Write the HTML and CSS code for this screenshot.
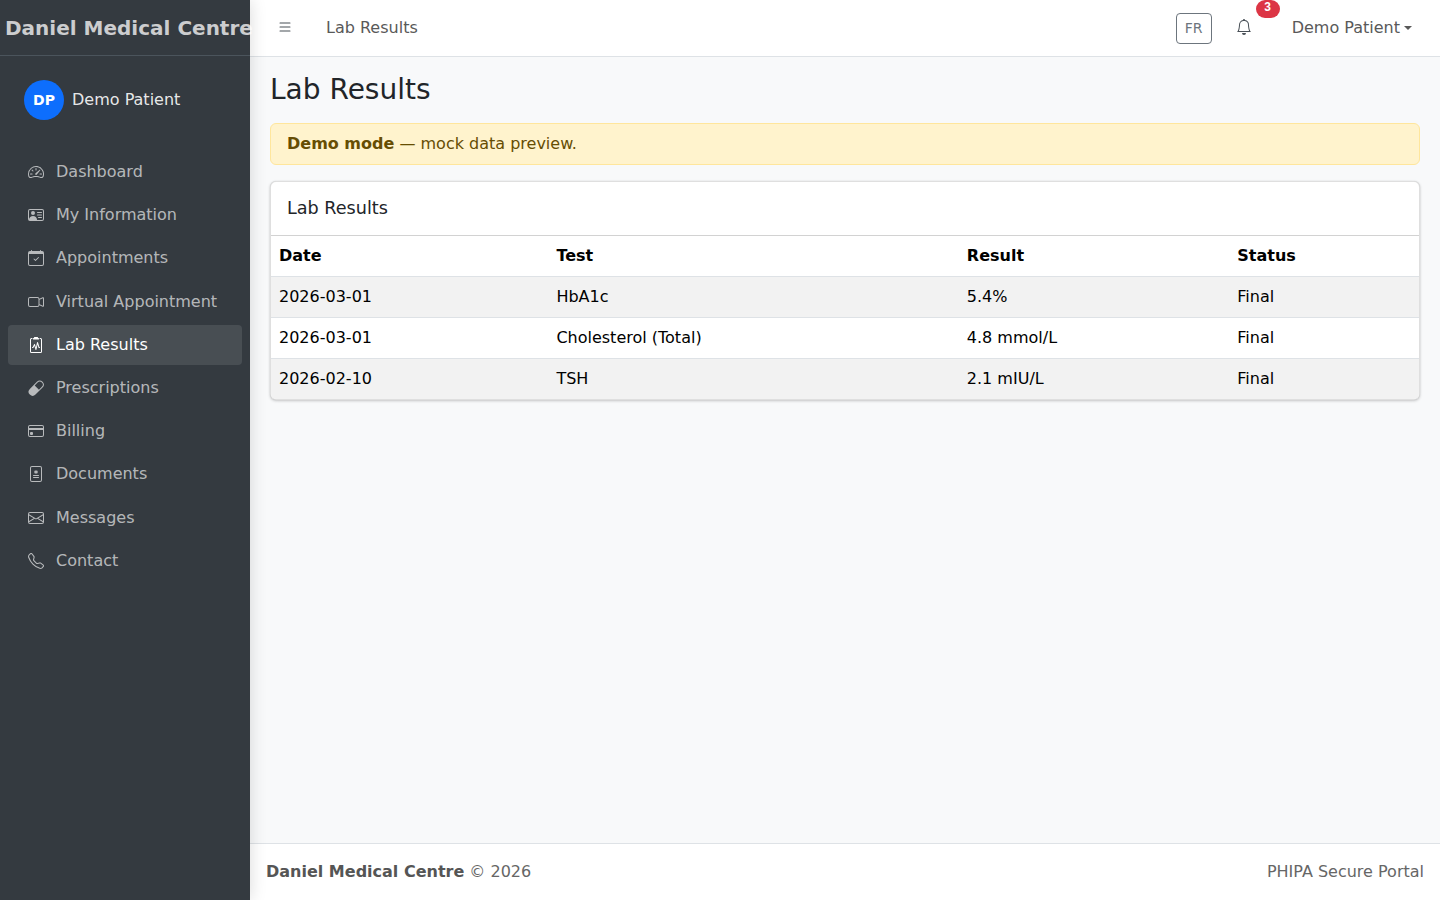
FILE: index.html
```html
<!DOCTYPE html>
<html lang="en">
<head>
<meta charset="utf-8">
<title>Lab Results</title>
<link rel="stylesheet" href="styles.css">
</head>
<body>
<div class="app">
  <aside class="sidebar">
    <div class="brand">Daniel Medical Centre</div>
    <div class="user-panel">
      <div class="avatar">DP</div>
      <span class="user-name">Demo Patient</span>
    </div>
    <nav class="side-nav">
      <a class="nav-link" href="#"><span class="nav-icon"><svg class="bi" viewBox="0 0 16 16"><path d="M8 4a.5.5 0 0 1 .5.5V6a.5.5 0 0 1-1 0V4.5A.5.5 0 0 1 8 4M3.732 5.732a.5.5 0 0 1 .707 0l.915.914a.5.5 0 1 1-.708.708l-.914-.915a.5.5 0 0 1 0-.707M2 10a.5.5 0 0 1 .5-.5h1.586a.5.5 0 0 1 0 1H2.5A.5.5 0 0 1 2 10m9.5 0a.5.5 0 0 1 .5-.5h1.5a.5.5 0 0 1 0 1H12a.5.5 0 0 1-.5-.5m.754-4.246a.39.39 0 0 0-.527-.02L7.547 9.31a.91.91 0 1 0 1.302 1.258l3.434-4.297a.39.39 0 0 0-.029-.518z"/><path fill-rule="evenodd" d="M0 10a8 8 0 1 1 15.547 2.661c-.442 1.253-1.845 1.602-2.932 1.25C11.309 13.488 9.475 13 8 13c-1.474 0-3.31.488-4.615.911-1.087.352-2.49.003-2.932-1.25A8 8 0 0 1 0 10m8-7a7 7 0 0 0-6.603 9.329c.203.575.923.876 1.68.63C4.397 12.533 6.358 12 8 12s3.604.532 4.923.96c.757.245 1.477-.056 1.68-.631A7 7 0 0 0 8 3"/></svg></span>Dashboard</a>
      <a class="nav-link" href="#"><span class="nav-icon"><svg class="bi" viewBox="0 0 16 16"><path d="M5 8a2 2 0 1 0 0-4 2 2 0 0 0 0 4m4-2.5a.5.5 0 0 1 .5-.5h4a.5.5 0 0 1 0 1h-4a.5.5 0 0 1-.5-.5M9 8a.5.5 0 0 1 .5-.5h4a.5.5 0 0 1 0 1h-4A.5.5 0 0 1 9 8m1 2.5a.5.5 0 0 1 .5-.5h3a.5.5 0 0 1 0 1h-3a.5.5 0 0 1-.5-.5"/><path d="M2 2a2 2 0 0 0-2 2v8a2 2 0 0 0 2 2h12a2 2 0 0 0 2-2V4a2 2 0 0 0-2-2zM1 4a1 1 0 0 1 1-1h12a1 1 0 0 1 1 1v8a1 1 0 0 1-1 1H8.96q.04-.245.04-.5C9 10.567 7.21 9 5 9c-2.086 0-3.8 1.398-3.984 3.181A1 1 0 0 1 1 12z"/></svg></span>My Information</a>
      <a class="nav-link" href="#"><span class="nav-icon"><svg class="bi" viewBox="0 0 16 16"><path d="M10.854 7.146a.5.5 0 0 1 0 .708l-3 3a.5.5 0 0 1-.708 0l-1.5-1.5a.5.5 0 1 1 .708-.708L7.5 9.793l2.646-2.647a.5.5 0 0 1 .708 0"/><path d="M3.5 0a.5.5 0 0 1 .5.5V1h8V.5a.5.5 0 0 1 1 0V1h1a2 2 0 0 1 2 2v11a2 2 0 0 1-2 2H2a2 2 0 0 1-2-2V3a2 2 0 0 1 2-2h1V.5a.5.5 0 0 1 .5-.5M1 4v10a1 1 0 0 0 1 1h12a1 1 0 0 0 1-1V4z"/></svg></span>Appointments</a>
      <a class="nav-link" href="#"><span class="nav-icon"><svg class="bi" viewBox="0 0 16 16"><path fill-rule="evenodd" d="M0 5a2 2 0 0 1 2-2h7.5a2 2 0 0 1 1.983 1.738l3.11-1.382A1 1 0 0 1 16 4.269v7.462a1 1 0 0 1-1.406.913l-3.111-1.382A2 2 0 0 1 9.5 13H2a2 2 0 0 1-2-2zm11.5 5.175 3.5 1.556V4.269l-3.5 1.556zM2 4a1 1 0 0 0-1 1v6a1 1 0 0 0 1 1h7.5a1 1 0 0 0 1-1V5a1 1 0 0 0-1-1z"/></svg></span>Virtual Appointment</a>
      <a class="nav-link active" href="#"><span class="nav-icon"><svg class="bi" viewBox="0 0 16 16"><path d="M9.5 0a.5.5 0 0 1 .5.5.5.5 0 0 0 .5.5.5.5 0 0 1 .5.5V2a.5.5 0 0 1-.5.5h-5A.5.5 0 0 1 5 2v-.5a.5.5 0 0 1 .5-.5.5.5 0 0 0 .5-.5.5.5 0 0 1 .5-.5z"/><path d="M3 2.5a.5.5 0 0 1 .5-.5H4a.5.5 0 0 0 0-1h-.5A1.5 1.5 0 0 0 2 2.5v12A1.5 1.5 0 0 0 3.5 16h9a1.5 1.5 0 0 0 1.5-1.5v-12A1.5 1.5 0 0 0 12.5 1H12a.5.5 0 0 0 0 1h.5a.5.5 0 0 1 .5.5v12a.5.5 0 0 1-.5.5h-9a.5.5 0 0 1-.5-.5z"/><path d="M9.979 5.356a.5.5 0 0 0-.968.04L7.92 10.49l-.94-3.135a.5.5 0 0 0-.926-.08L4.69 10H4.5a.5.5 0 0 0 0 1H5a.5.5 0 0 0 .447-.276l.936-1.873 1.138 3.793a.5.5 0 0 0 .968-.04L9.58 7.51l.94 3.135A.5.5 0 0 0 11 11h.5a.5.5 0 0 0 0-1h-.128z"/></svg></span>Lab Results</a>
      <a class="nav-link" href="#"><span class="nav-icon"><svg class="bi" viewBox="0 0 16 16"><path d="M1.828 8.9 8.9 1.827a4 4 0 1 1 5.657 5.657l-7.07 7.071A4 4 0 1 1 1.827 8.9Zm9.128.771 2.893-2.893a3 3 0 1 0-4.243-4.242L6.713 5.429z"/></svg></span>Prescriptions</a>
      <a class="nav-link" href="#"><span class="nav-icon"><svg class="bi" viewBox="0 0 16 16"><path d="M0 4a2 2 0 0 1 2-2h12a2 2 0 0 1 2 2v8a2 2 0 0 1-2 2H2a2 2 0 0 1-2-2zm2-1a1 1 0 0 0-1 1v1h14V4a1 1 0 0 0-1-1zm13 4H1v5a1 1 0 0 0 1 1h12a1 1 0 0 0 1-1z"/><path d="M2 10a1 1 0 0 1 1-1h1a1 1 0 0 1 1 1v1a1 1 0 0 1-1 1H3a1 1 0 0 1-1-1z"/></svg></span>Billing</a>
      <a class="nav-link" href="#"><span class="nav-icon"><svg class="bi" viewBox="0 0 16 16"><path d="M8.5 4.5a.5.5 0 0 0-1 0v.634l-.549-.317a.5.5 0 1 0-.5.866L7 6l-.549.317a.5.5 0 1 0 .5.866l.549-.317V7.5a.5.5 0 1 0 1 0v-.634l.549.317a.5.5 0 1 0 .5-.866L9 6l.549-.317a.5.5 0 1 0-.5-.866l-.549.317zM5.5 9a.5.5 0 0 0 0 1h5a.5.5 0 0 0 0-1zm0 2a.5.5 0 0 0 0 1h5a.5.5 0 0 0 0-1z"/><path d="M2 2a2 2 0 0 1 2-2h8a2 2 0 0 1 2 2v12a2 2 0 0 1-2 2H4a2 2 0 0 1-2-2zm10-1H4a1 1 0 0 0-1 1v12a1 1 0 0 0 1 1h8a1 1 0 0 0 1-1V2a1 1 0 0 0-1-1"/></svg></span>Documents</a>
      <a class="nav-link" href="#"><span class="nav-icon"><svg class="bi" viewBox="0 0 16 16"><path d="M0 4a2 2 0 0 1 2-2h12a2 2 0 0 1 2 2v8a2 2 0 0 1-2 2H2a2 2 0 0 1-2-2zm2-1a1 1 0 0 0-1 1v.217l7 4.2 7-4.2V4a1 1 0 0 0-1-1zm13 2.383-4.708 2.825L15 11.105zm-.034 6.876-5.64-3.471L8 9.583l-1.326-.795-5.64 3.47A1 1 0 0 0 2 13h12a1 1 0 0 0 .966-.741M1 11.105l4.708-2.897L1 5.383z"/></svg></span>Messages</a>
      <a class="nav-link" href="#"><span class="nav-icon"><svg class="bi" viewBox="0 0 16 16"><path d="M3.654 1.328a.678.678 0 0 0-1.015-.063L1.605 2.3c-.483.484-.661 1.169-.45 1.77a17.6 17.6 0 0 0 4.168 6.608 17.6 17.6 0 0 0 6.608 4.168c.601.211 1.286.033 1.77-.45l1.034-1.034a.678.678 0 0 0-.063-1.015l-2.307-1.794a.68.68 0 0 0-.58-.122l-2.19.547a1.75 1.75 0 0 1-1.657-.459L5.482 8.062a1.75 1.75 0 0 1-.46-1.657l.548-2.19a.68.68 0 0 0-.122-.58zM1.884.511a1.745 1.745 0 0 1 2.612.163L6.29 2.98c.329.423.445.974.315 1.494l-.547 2.19a.68.68 0 0 0 .178.643l2.457 2.457a.68.68 0 0 0 .644.178l2.189-.547a1.75 1.75 0 0 1 1.494.315l2.306 1.794c.829.645.905 1.87.163 2.611l-1.034 1.034c-.74.74-1.846 1.065-2.877.702a18.6 18.6 0 0 1-7.01-4.42 18.6 18.6 0 0 1-4.42-7.009c-.362-1.03-.037-2.137.703-2.877z"/></svg></span>Contact</a>
    </nav>
  </aside>
  <div class="main">
    <header class="topbar">
      <button class="icon-btn menu-btn" type="button" aria-label="Menu"><svg class="bi" viewBox="0 0 16 16"><path fill-rule="evenodd" d="M2.5 12a.5.5 0 0 1 .5-.5h10a.5.5 0 0 1 0 1H3a.5.5 0 0 1-.5-.5m0-4a.5.5 0 0 1 .5-.5h10a.5.5 0 0 1 0 1H3a.5.5 0 0 1-.5-.5m0-4a.5.5 0 0 1 .5-.5h10a.5.5 0 0 1 0 1H3a.5.5 0 0 1-.5-.5"/></svg></button>
      <span class="crumb">Lab Results</span>
      <div class="top-actions">
        <button class="lang-btn" type="button">FR</button>
        <button class="icon-btn bell-btn" type="button" aria-label="Notifications"><svg class="bi" viewBox="0 0 16 16"><path d="M8 16a2 2 0 0 0 2-2H6a2 2 0 0 0 2 2M8 1.918l-.797.161A4 4 0 0 0 4 6c0 .628-.134 2.197-.459 3.742-.16.767-.376 1.566-.663 2.258h10.244c-.287-.692-.502-1.49-.663-2.258C12.134 8.197 12 6.628 12 6a4 4 0 0 0-3.203-3.92zM14.22 12c.223.447.481.801.78 1H1c.299-.199.557-.553.78-1C2.68 10.2 3 6.88 3 6c0-2.42 1.72-4.44 4.005-4.901a1 1 0 1 1 1.99 0A5 5 0 0 1 13 6c0 .88.32 4.2 1.22 6"/></svg><span class="badge">3</span></button>
        <a class="user-menu" href="#">Demo Patient<span class="caret"></span></a>
      </div>
    </header>
    <main class="content">
      <h1 class="page-title">Lab Results</h1>
      <div class="alert"><strong>Demo mode</strong> — mock data preview.</div>
      <section class="card">
        <div class="card-header">Lab Results</div>
        <table class="table">
          <thead>
            <tr><th>Date</th><th>Test</th><th>Result</th><th>Status</th></tr>
          </thead>
          <tbody>
            <tr><td>2026-03-01</td><td>HbA1c</td><td>5.4%</td><td>Final</td></tr>
            <tr><td>2026-03-01</td><td>Cholesterol (Total)</td><td>4.8 mmol/L</td><td>Final</td></tr>
            <tr><td>2026-02-10</td><td>TSH</td><td>2.1 mIU/L</td><td>Final</td></tr>
          </tbody>
        </table>
      </section>
    </main>
    <footer class="footer">
      <span><strong>Daniel Medical Centre</strong> © 2026</span>
      <span>PHIPA Secure Portal</span>
    </footer>
  </div>
</div>
</body>
</html>
```

FILE: styles.css
```css
* { box-sizing: border-box; }
html, body { height: 100%; }
body {
  margin: 0;
  font-family: "DejaVu Sans", sans-serif;
  font-size: 16px;
  line-height: 1.5;
  color: #212529;
  background: #f8f9fa;
  overflow: hidden;
}
a { text-decoration: none; }
.bi { display: block; width: 16px; height: 16px; fill: currentColor; }

.app { display: flex; height: 100vh; }

.sidebar {
  flex: 0 0 250px;
  width: 250px;
  background: #343a40;
  position: relative;
  z-index: 2;
  box-shadow: 0 0 16px rgba(0, 0, 0, .15);
}
.brand {
  height: 56px;
  padding: 0 5px;
  display: flex;
  align-items: center;
  white-space: nowrap;
  font-size: 20px;
  font-weight: 700;
  color: rgba(255, 255, 255, .75);
  border-bottom: 1px solid #4b545c;
}
.user-panel {
  display: flex;
  align-items: center;
  gap: 8px;
  padding: 24px 24px 32px;
}
.avatar {
  width: 40px;
  height: 40px;
  border-radius: 50%;
  background: #0d6efd;
  color: #fff;
  font-size: 14px;
  font-weight: 700;
  display: flex;
  align-items: center;
  justify-content: center;
}
.user-name { color: rgba(255, 255, 255, .9); }
.side-nav { display: flex; flex-direction: column; gap: 3.2px; padding: 0 8px; }
.nav-link {
  display: flex;
  align-items: center;
  height: 40px;
  padding: 0 16px;
  color: rgba(255, 255, 255, .65);
  border-radius: 4px;
}
.nav-link.active { background: rgba(255, 255, 255, .1); color: #fff; }
.nav-icon {
  flex: 0 0 24px;
  margin-right: 8px;
  display: flex;
  justify-content: center;
}

.main { flex: 1; min-width: 0; display: flex; flex-direction: column; }

.topbar {
  flex: 0 0 57px;
  display: flex;
  align-items: center;
  background: #fff;
  border-bottom: 1px solid #dee2e6;
  padding: 0 28px 0 0;
}
.icon-btn {
  border: 0;
  background: none;
  padding: 0;
  color: #495057;
  position: relative;
  display: block;
}
.menu-btn { margin: 0 33px 3px 27px; }
.crumb { color: #595959; }
.top-actions { margin-left: auto; display: flex; align-items: center; }
.lang-btn {
  width: 36px;
  height: 31px;
  padding: 0;
  border: 1px solid #6c757d;
  border-radius: 4px;
  background: none;
  color: #6c757d;
  font: 14px/1.5 "DejaVu Sans", sans-serif;
}
.bell-btn { margin: 0 40px 2px 24px; }
.badge {
  position: absolute;
  left: 20px;
  top: -19px;
  width: 24px;
  height: 18px;
  border-radius: 9px;
  background: #dc3545;
  color: #fff;
  font-size: 12px;
  font-weight: 700;
  line-height: 14px;
  text-align: center;
}
.user-menu { color: #595959; display: flex; align-items: center; }
.caret {
  margin-left: 4px;
  border-top: 4.8px solid currentColor;
  border-left: 4.8px solid transparent;
  border-right: 4.8px solid transparent;
}

.content { flex: 1; padding: 16px 20px 0; min-height: 0; }
.page-title {
  margin: 0 0 16px;
  font-size: 28px;
  font-weight: 500;
  line-height: 1.2;
}
.alert {
  padding: 8px 16px;
  margin-bottom: 16px;
  background: #fff3cd;
  border: 1px solid #ffe69c;
  border-radius: 6px;
  color: #664d03;
}
.card {
  background: #fff;
  border: 1px solid rgba(0, 0, 0, .125);
  border-radius: 6px;
  box-shadow: 0 0 1px rgba(0, 0, 0, .125), 0 1px 3px rgba(0, 0, 0, .2);
  overflow: hidden;
}
.card-header {
  padding: 13.3px 16px;
  font-size: 17.6px;
  line-height: 1.5;
  border-bottom: 1px solid rgba(0, 0, 0, .175);
}
.table { width: 100%; border-collapse: collapse; color: #000; }
.table th, .table td {
  padding: 8px;
  text-align: left;
  font-weight: 400;
  border-bottom: 1px solid #dee2e6;
}
.table th { font-weight: 700; }
.table tbody tr:nth-child(odd) { background: #f2f2f2; }
.table tbody tr:last-child td { border-bottom: 0; }

.footer {
  flex: 0 0 57px;
  display: flex;
  align-items: center;
  justify-content: space-between;
  padding: 0 16px;
  background: #fff;
  border-top: 1px solid #dee2e6;
  color: #666;
}
.footer strong { color: #555; }
```
